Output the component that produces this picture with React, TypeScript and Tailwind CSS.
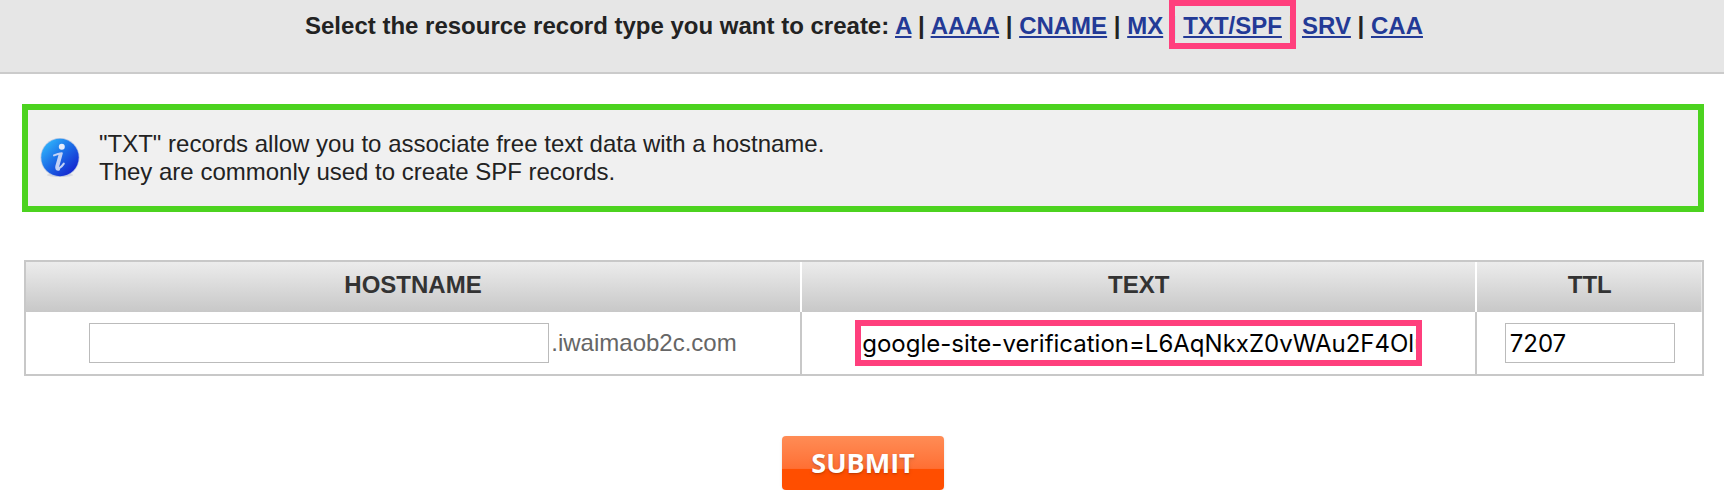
import React, { useState } from "react";

const recordTypes = ["A", "AAAA", "CNAME", "MX", "TXT/SPF", "SRV", "CAA"];
const currentType = "TXT/SPF";

const InfoIcon = () => (
  <svg className="size-10 shrink-0" viewBox="0 0 40 40" aria-hidden="true">
    <defs>
      <linearGradient id="info-fill" x1="0.1" y1="0.1" x2="0.85" y2="0.9">
        <stop offset="0" stopColor="#2fb4fb" />
        <stop offset="0.5" stopColor="#1b6ae6" />
        <stop offset="1" stopColor="#1526cf" />
      </linearGradient>
    </defs>
    <ellipse cx="20" cy="37" rx="13" ry="2" fill="#d9dadf" />
    <circle cx="20" cy="19.5" r="19.5" fill="#b4c4e4" />
    <circle cx="20" cy="19.5" r="18.7" fill="url(#info-fill)" />
    <circle cx="21.8" cy="8.8" r="3" fill="#e6edfc" />
    {/* stem with its two serifs */}
    <path
      d="M14 17.4 Q18 15.6 21.8 15.2 L18.2 28.6 Q17.8 31 19.6 30 Q22 28.4 23.8 25.6"
      fill="none"
      stroke="#c3d2f6"
      strokeWidth="2"
      strokeLinecap="round"
      strokeLinejoin="round"
    />
    <path
      d="M20.2 16.4 L16.8 28.4 Q16.2 31.4 18.6 31.2"
      fill="none"
      stroke="#c3d2f6"
      strokeWidth="3"
      strokeLinecap="round"
    />
  </svg>
);

const RecordTypeNav = () => (
  <nav className="h-[74px] border-b-2 border-[#cbcbcb] bg-[#e6e6e6] pt-3 pl-1 text-center font-bold">
    Select the resource record type you want to create:{" "}
    {recordTypes.map((type, idx) => (
      <React.Fragment key={type}>
        {idx > 0 && " | "}
        <span className="relative">
          <a
            href="#"
            className="text-[#233a96] underline decoration-2 underline-offset-2"
          >
            {type}
          </a>
          {type === currentType && (
            <span className="pointer-events-none absolute -inset-x-3.5 -top-3 -bottom-2.5 border-6 border-[#ff3f7d]" />
          )}
        </span>
      </React.Fragment>
    ))}
  </nav>
);

const App = () => {
  const [hostname, setHostname] = useState("");
  const [text, setText] = useState(
    "google-site-verification=L6AqNkxZ0vWAu2F4Olu"
  );
  const [ttl, setTtl] = useState("7207");

  return (
    <div className="bg-white font-['Liberation_Sans',Arial,sans-serif] text-2xl leading-7 text-[#222]">
      <RecordTypeNav />

      <main className="pt-[30px] pr-5 pl-[22px]">
        {/* info */}
        <div className="flex items-center gap-[19px] border-6 border-[#4cd31f] bg-[#f0f0f0] py-5 pr-5 pl-3">
          <InfoIcon />
          <p>
            "TXT" records allow you to associate free text data with a hostname.
            <br />
            They are commonly used to create SPF records.
          </p>
        </div>

        <form onSubmit={(e) => e.preventDefault()}>
          {/* record */}
          <div className="mt-12 ml-0.5 border-2 border-[#c8c8c8]">
            <table className="w-full table-fixed border-separate border-spacing-0">
              <thead>
                <tr className="h-[50px] bg-linear-to-b from-[#ececec] to-[#c8c8c8] text-[#333]">
                  <th className="w-[46.3%] border-r-2 border-white p-0 pb-1">
                    <label htmlFor="hostname">HOSTNAME</label>
                  </th>
                  <th className="border-r-2 border-white p-0 pb-1">
                    <label htmlFor="text">TEXT</label>
                  </th>
                  <th className="w-[13.4%] p-0 pb-1">
                    <label htmlFor="ttl">TTL</label>
                  </th>
                </tr>
              </thead>
              <tbody>
                <tr className="h-[62px]">
                  <td className="border-r-2 border-[#c8c8c8] p-0">
                    <div className="flex items-center justify-center gap-0.5 text-[#666]">
                      <input
                        id="hostname"
                        type="text"
                        value={hostname}
                        onChange={(e) => setHostname(e.target.value)}
                        className="h-10 w-[460px] min-w-0 border border-[#bbb] px-1 font-[Inter,sans-serif] text-black"
                      />
                      .iwaimaob2c.com
                    </div>
                  </td>
                  <td className="border-r-2 border-[#c8c8c8] p-0">
                    <input
                      id="text"
                      type="text"
                      value={text}
                      onChange={(e) => setText(e.target.value)}
                      className="mx-auto block h-[46px] w-[567px] max-w-full border-6 border-[#ff3f7d] pl-px font-[Inter,sans-serif] text-black"
                    />
                  </td>
                  <td className="p-0">
                    <input
                      id="ttl"
                      type="text"
                      value={ttl}
                      onChange={(e) => setTtl(e.target.value)}
                      className="mx-auto block h-10 w-[170px] max-w-full border border-[#bbb] px-1 font-[Inter,sans-serif] text-black"
                    />
                  </td>
                </tr>
              </tbody>
            </table>
          </div>

          <div className="mt-15 flex justify-center">
            <button
              type="submit"
              className="h-[54px] w-[162px] rounded-sm bg-linear-to-b from-[#ff8c55] from-0% via-[#ff6f33] via-60% to-[#ff4e00] to-62% font-['Open_Sans',sans-serif] text-[27px] font-bold text-white shadow-sm text-shadow-md"
            >
              SUBMIT
            </button>
          </div>
        </form>
      </main>
    </div>
  );
};

export default App;
